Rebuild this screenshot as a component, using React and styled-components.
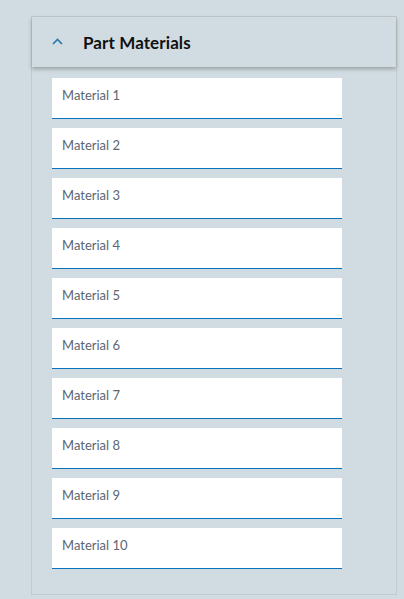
import React from "react";
import styled, { createGlobalStyle } from "styled-components";

const Global = createGlobalStyle`
  html, body { margin: 0; padding: 0; background: #d0dce1; }
  body { font-family: Lato, "Open Sans", sans-serif; }
`;

const Page = styled.div`
  padding: 16px 7px 0 31px;
  height: 599px;
  box-sizing: border-box;
`;

const Panel = styled.section`
  width: 366px;
  box-sizing: border-box;
  border: 1px solid #c4c9cb;
  background: #d0dce1;
`;

const Header = styled.div`
  display: flex;
  align-items: center;
  height: 50px;
  padding-left: 20px;
  box-shadow: 0 2px 4px rgba(0, 0, 0, 0.28);
  position: relative;
`;

const Chevron = styled.svg`
  width: 11px;
  height: 7px;
  margin-right: 20px;
  margin-top: -2px;
`;

const Title = styled.h2`
  margin: 0;
  font-family: Lato, sans-serif;
  font-size: 17px;
  font-weight: 700;
  color: #111;
  letter-spacing: 0.1px;
`;

const List = styled.div`
  display: flex;
  flex-direction: column;
  gap: 10px;
  padding: 11px 0 25px 20px;
`;

const Item = styled.div`
  width: 290px;
  height: 41px;
  box-sizing: border-box;
  background: #fff;
  border-bottom: 1.5px solid #0b72bd;
  padding: 9px 10px 0;
  font-family: Lato, sans-serif;
  font-size: 13px;
  line-height: 16px;
  color: #5a6672;
  & + & { margin-top: -1px; }
`;

export default function App() {
  const items = Array.from({ length: 10 }, (_, i) => `Material ${i + 1}`);
  return (
    <Page>
      <Global />
      <Panel>
        <Header>
          <Chevron viewBox="0 0 11 7">
            <path d="M1 6 L5.5 1.5 L10 6" fill="none" stroke="#2b79a9" strokeWidth="1.7" />
          </Chevron>
          <Title>Part Materials</Title>
        </Header>
        <List>
          {items.map((t) => (
            <Item key={t}>{t}</Item>
          ))}
        </List>
      </Panel>
    </Page>
  );
}
